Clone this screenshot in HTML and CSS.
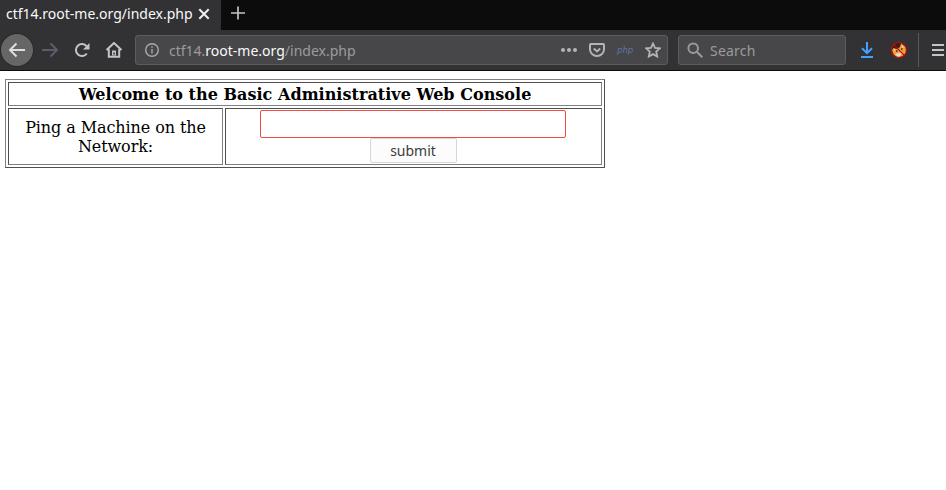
FILE: index.html
```html
<!DOCTYPE html>
<html lang="en">
<head>
<meta charset="utf-8">
<title>ctf14.root-me.org/index.php</title>
<link rel="stylesheet" href="styles.css">
</head>
<body>
<header class="tabs">
  <div class="tab"><span class="tab-title">ctf14.root-me.org/index.php</span>
    <svg class="close" width="12" height="12" viewBox="0 0 12 12"><path d="M1.300 1.300l9.400 9.400M10.700 1.300l-9.400 9.400"/></svg>
  </div>
  <svg class="plus" width="16" height="16" viewBox="0 0 16 16"><path d="M8 1.500v13M1 8h14"/></svg>
</header>
<nav class="toolbar">
  <span class="back"><svg width="18" height="16" viewBox="0 0 18 16"><path d="M17 8H2M8.500 1.500L2 8l6.500 6.500"/></svg></span>
  <svg class="icon forward" width="18" height="16" viewBox="0 0 18 16"><path d="M1 8h15M9.500 1.500L16 8l-6.500 6.500"/></svg>
  <svg class="icon reload" width="16" height="16" viewBox="0 0 16 16"><path d="M12.800 11.500A6 6 0 1 1 12.600 4.200"/><path class="solid" d="M15.500 1v6.500H9z"/></svg>
  <svg class="icon home" width="18" height="16" viewBox="0 0 18 16"><path d="M1.500 8L9 1l7.500 7M3.800 7v7.800h10.400V7"/><path class="solid" d="M7 8.500h4v5H7z"/><path class="hole" d="M9 10.500v2"/></svg>
  <div class="address">
    <svg class="info" width="14" height="14" viewBox="0 0 14 14"><circle cx="7" cy="7" r="6.300"/><path d="M7 6v4.500M7 3.300v1.500"/></svg>
    <span class="url">ctf14.<b>root-me.org</b>/index.php</span>
    <svg class="dots" width="16" height="16" viewBox="0 0 16 16"><circle cx="2" cy="8" r="2"/><circle cx="8" cy="8" r="2"/><circle cx="14" cy="8" r="2"/></svg>
    <svg class="icon pocket" width="16" height="16" viewBox="0 0 16 16"><path d="M2 2h12a1 1 0 0 1 1 1v4.500a7 6.500 0 0 1-14 0V3a1 1 0 0 1 1-1zM4.800 6.500L8 9.500l3.200-3"/></svg>
    <span class="php">php</span>
    <svg class="icon star" width="16" height="16" viewBox="0 0 16 16"><path d="M8 1.500l2 4.400 4.800.5-3.600 3.200 1 4.900L8 12.100l-4.200 2.400 1-4.900L1.200 6.400 6 5.900z"/></svg>
  </div>
  <div class="search">
    <svg width="16" height="16" viewBox="0 0 16 16"><circle cx="6.200" cy="6.200" r="4.800"/><path d="M9.800 9.800l5.500 5.500"/></svg>
    <span>Search</span>
  </div>
  <svg class="download" width="14" height="17" viewBox="0 0 14 17"><path d="M7 1v11M2 7.200L7 12.200l5-5M1 16h12"/></svg>
  <svg class="fox" width="18" height="18" viewBox="0 0 18 18"><circle cx="9" cy="9" r="7.500" fill="#3b1c18"/><path d="M2 10l1-3 4 1 3-2 1-4 2 2 3 2v6l-3 3-5 2-4-3z" fill="#eb9f36"/><path d="M3 9l2-1v2zM12 4l2 2-2 1zM5 13l4-1 3-1-1 3-3 2z" fill="#e4dcd2"/><path d="M6 10h1.500M11 8h1.500" stroke="#402316" stroke-width="1.500"/><circle cx="9" cy="9" r="7.500" fill="none" stroke="#b90d0d" stroke-width="1.200"/><path d="M3.700 3.700l10.600 10.600" stroke="#b90d0d" stroke-width="1.200"/></svg>
  <span class="divider"></span>
  <svg class="menu" width="12" height="12" viewBox="0 0 12 12"><path d="M0 1h12M0 6h12M0 11h12"/></svg>
</nav>
<main>
  <form class="console">
    <div class="cell heading"><span>Welcome to the Basic Administrative Web Console</span></div>
    <div class="cell label"><span>Ping a Machine on the<br>Network:</span></div>
    <div class="cell fields"><input type="text" aria-label="Machine"><button type="button"><span>submit</span></button></div>
  </form>
</main>
</body>
</html>
```
FILE: styles.css
```css
* { box-sizing: border-box; }
body { margin: 0; height: 490px; overflow: hidden; background: #fff; font-family: "Noto Sans", sans-serif; font-size: 14px; }
svg { display: block; flex: none; fill: none; stroke: #c4c4c5; stroke-width: 2; }
span { white-space: nowrap; }
.tabs { height: 30px; background: #0c0c0d; display: flex; }
.tab { width: 221px; height: 30px; padding: 0 0 2px 6px; background: #323234; color: #f9f9fa; display: flex; align-items: center; }
.tab-title { width: 192px; line-height: 20px; }
.close { stroke: #f0f0f0; }
.plus { margin: 5px 0 0 9px; stroke-width: 1.700; }
.toolbar { height: 41px; padding-bottom: 1px; background: #323234; border-bottom: 1px solid #0c0c0d; display: flex; align-items: center; }
.back { width: 32px; height: 32px; margin-left: 1px; border-radius: 50%; background: #666667; box-shadow: 0 0 0 1px #29292a; display: grid; place-items: center; flex: none; }
.back svg { stroke: #dedede; }
.forward { margin-left: 8px; stroke: #5b5d6b; }
.reload { margin-left: 15px; }
.home { margin-left: 15px; }
.solid { fill: #c4c4c5; stroke: none; }
.hole { stroke: #323234; stroke-width: 1.500; }
.address, .search { height: 30px; background: #474749; border: 1px solid #5c5c5e; border-radius: 3px; display: flex; align-items: center; flex: none; color: #9b9b9d; }
.address { width: 533px; margin-left: 12px; padding-left: 9px; }
.info { stroke: #a9a9aa; stroke-width: 1.400; }
.url { width: 392px; margin-left: 10px; padding-top: 2px; line-height: 20px; }
.url b { font-weight: 400; color: #f9f9fa; }
.dots { fill: #b4b4b5; stroke: none; }
.pocket { margin-left: 12px; stroke: #b4b4b5; }
.php { width: 16px; margin: 0 12px; font: italic 8.500px "DejaVu Sans", sans-serif; color: #6672a8; }
.star { stroke: #b4b4b5; stroke-width: 1.800; }
.search { width: 168px; margin-left: 10px; padding-left: 8px; }
.search svg { stroke: #99999b; }
.search span { margin-left: 7px; padding-top: 2px; line-height: 20px; letter-spacing: .2px; }
.download { margin-left: 14px; stroke: #45a1ff; }
.fox { margin-left: 16px; stroke: none; }
.divider { width: 1px; height: 34px; margin-left: 10px; background: #59595b; flex: none; }
.menu { margin-left: 13px; }
main { padding: 8px 5px; }
.console { width: 600px; height: 89px; padding: 2px; border: 1px solid; border-color: #808080 #505050 #505050 #808080; display: grid; grid-template: 24px 57px / 215px 377px; gap: 2px; font: 16px/19px "DejaVu Serif", serif; color: #000; }
.cell { border: 1px solid; border-color: #505050 #808080 #808080 #505050; text-align: center; display: grid; place-content: center; }
.heading { grid-column: 1 / 3; font-weight: 700; letter-spacing: .03px; }
.label { letter-spacing: -.09px; }
.fields { display: flex; flex-direction: column; align-items: center; justify-content: flex-start; padding: 1px 1px 0 0; }
input { width: 306px; height: 28px; margin: 0; border: 1px solid #ef4b43; border-radius: 2px; background: #fff; outline: none; }
button { width: 87px; height: 25px; padding: 0; border: 1px solid #d6d6d6; border-radius: 2px; background: #fcfcfc; color: #3b3b3b; font: 14px/20px "Noto Sans", sans-serif; }
```
